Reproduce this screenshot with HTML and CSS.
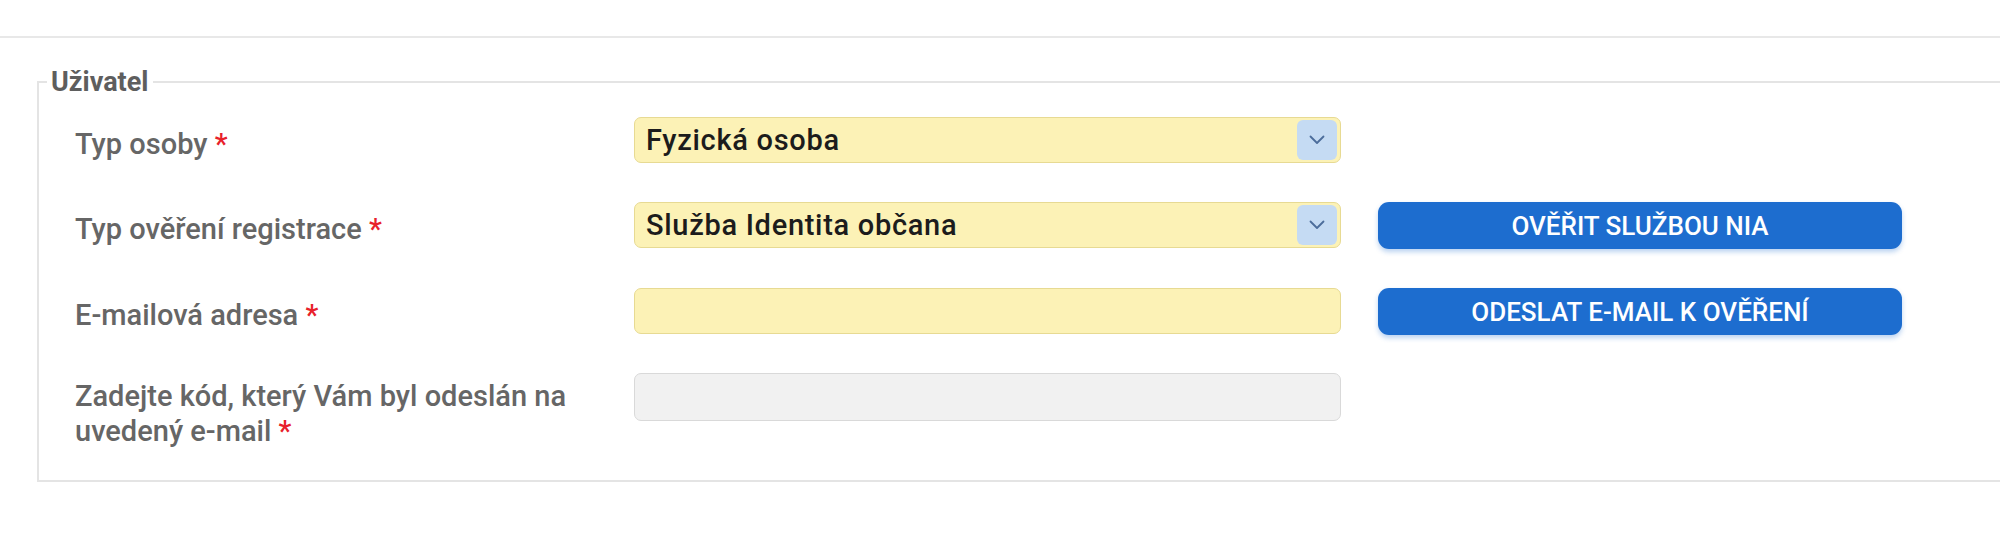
FILE: index.html
```html
<!DOCTYPE html>
<html lang="cs">
<head>
<meta charset="utf-8">
<title>Uživatel</title>
<link rel="stylesheet" href="styles.css">
</head>
<body>
<div class="topbar"></div>
<fieldset class="group">
  <legend class="group-title">Uživatel</legend>
  <div class="form-grid">
    <label class="lbl">Typ osoby <span class="req">*</span></label>
    <div class="select">
      <span class="select-value">Fyzická osoba</span>
      <span class="select-arrow"><svg width="16" height="10" viewBox="0 0 16 10"><polyline points="1.5,1.5 8,8 14.5,1.5" fill="none" stroke="#4c6d9b" stroke-width="1.8" stroke-linecap="round" stroke-linejoin="round"/></svg></span>
    </div>
    <div class="cell-empty"></div>

    <label class="lbl">Typ ověření registrace <span class="req">*</span></label>
    <div class="select">
      <span class="select-value">Služba Identita občana</span>
      <span class="select-arrow"><svg width="16" height="10" viewBox="0 0 16 10"><polyline points="1.5,1.5 8,8 14.5,1.5" fill="none" stroke="#4c6d9b" stroke-width="1.8" stroke-linecap="round" stroke-linejoin="round"/></svg></span>
    </div>
    <button class="btn" type="button">OVĚŘIT SLUŽBOU NIA</button>

    <label class="lbl">E-mailová adresa <span class="req">*</span></label>
    <div class="input input-required"></div>
    <button class="btn" type="button">ODESLAT E-MAIL K OVĚŘENÍ</button>

    <label class="lbl lbl-multi">Zadejte kód, který Vám byl odeslán na uvedený e-mail <span class="req">*</span></label>
    <div class="input input-disabled"></div>
    <div class="cell-empty"></div>
  </div>
</fieldset>
</body>
</html>
```
FILE: styles.css
```css
html, body {
  margin: 0;
  padding: 0;
  background: #ffffff;
}
body {
  width: 2000px;
  height: 546px;
  overflow: hidden;
  font-family: Roboto, "Liberation Sans", Arial, sans-serif;
}
.topbar {
  height: 36px;
  border-bottom: 2px solid #e8e8e8;
}
.group {
  margin: 29px -60px 0 37px;
  padding: 20px 0 31px 0;
  border: 2px solid #e4e4e4;
  border-right: none;
  min-width: 0;
}
.group-title {
  margin-left: 8px;
  padding: 0 5px 0 4px;
  font-size: 27px;
  line-height: 30px;
  font-weight: 700;
  color: #5e5e5e;
}
.form-grid {
  display: grid;
  grid-template-columns: 522px 707px 524px;
  column-gap: 37px;
  row-gap: 39px;
  padding-left: 36px;
  align-items: start;
}
.lbl {
  display: block;
  padding-top: 10px;
  font-size: 29px;
  line-height: 35px;
  font-weight: 500;
  color: #666666;
}
.lbl-multi {
  padding-top: 5px;
}
.req {
  color: #e8212b;
}
.select {
  box-sizing: border-box;
  height: 46px;
  display: flex;
  align-items: center;
  justify-content: space-between;
  background: #fcf2b6;
  border: 1px solid #e7da93;
  border-radius: 7px;
  padding: 0 3px 0 11px;
}
.select-value {
  font-size: 29px;
  letter-spacing: 0.7px;
  font-weight: 500;
  color: #1c1c1c;
}
.select-arrow {
  width: 40px;
  height: 40px;
  display: flex;
  align-items: center;
  justify-content: center;
  background: #c5dbf3;
  border-radius: 6px;
}
.input {
  box-sizing: border-box;
  height: 46px;
  border-radius: 7px;
}
.input-required {
  background: #fcf2b6;
  border: 1px solid #e7da93;
}
.input-disabled {
  height: 48px;
  margin-top: -1px;
  background: #f1f1f1;
  border: 1px solid #d9d9d9;
}
.btn {
  height: 47px;
  border: none;
  border-radius: 11px;
  background: #1d6dcf;
  color: #ffffff;
  font-family: Roboto, "Liberation Sans", Arial, sans-serif;
  font-size: 26px;
  font-weight: 500;
  box-shadow: 0 3px 5px rgba(29, 109, 207, 0.3);
  padding: 0;
}
.cell-empty {
  height: 46px;
}
```
